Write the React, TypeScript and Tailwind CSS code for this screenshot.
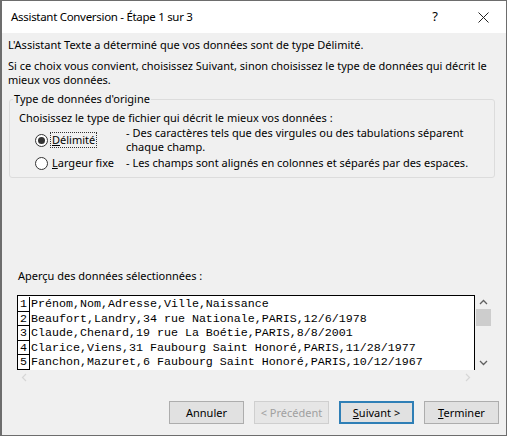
import React from "react"

const rows = [
  "Prénom,Nom,Adresse,Ville,Naissance",
  "Beaufort,Landry,34 rue Nationale,PARIS,12/6/1978",
  "Claude,Chenard,19 rue La Boétie,PARIS,8/8/2001",
  "Clarice,Viens,31 Faubourg Saint Honoré,PARIS,11/28/1977",
  "Fanchon,Mazuret,6 Faubourg Saint Honoré,PARIS,10/12/1967",
]

const mono = { fontFamily: '"Liberation Mono", monospace' }

function Radio({ checked }: { checked?: boolean }) {
  return (
    <span className="w-[13px] h-[13px] rounded-full border border-[#333] bg-white flex items-center justify-center shrink-0">
      {checked && <span className="w-[7px] h-[7px] rounded-full bg-[#333]" />}
    </span>
  )
}

function Btn({ children, disabled, primary }: { children: React.ReactNode; disabled?: boolean; primary?: boolean }) {
  return (
    <button
      className={
        "w-[75px] h-[23px] text-[11px] leading-none flex items-center justify-center " +
        (primary
          ? "border-2 border-[#2f7fb6] bg-[#e1e1e1] text-black"
          : disabled
          ? "border border-[#cfcfcf] bg-[#e6e6e6] text-[#a0a0a0]"
          : "border border-[#adadad] bg-[#e1e1e1] text-black")
      }
    >
      {children}
    </button>
  )
}

export default function App() {
  return (
    <div
      className="w-[507px] h-[436px] bg-[#f0f0f0] border border-[#6d6d6d] border-l-2 flex flex-col text-black"
      style={{ fontFamily: '"Noto Sans", "Open Sans", sans-serif' }}
    >
      <div className="h-[32px] bg-white flex items-center pl-[9px] shrink-0">
        <span className="text-[11.5px] tracking-[-0.3px] flex-1">Assistant Conversion - Étape 1 sur 3</span>
        <span className="text-[13px] w-[46px] text-center mr-[2px]">?</span>
        <span className="w-[46px] flex justify-center">
          <svg width="11" height="11" viewBox="0 0 11 11" fill="none" stroke="#222" strokeWidth="1">
            <path d="M0.5 0.5 L10.5 10.5 M10.5 0.5 L0.5 10.5" />
          </svg>
        </span>
      </div>

      <div className="flex flex-col px-[6px] pt-[4px] text-[11px] leading-[14px] flex-1">
        <p className="mt-[1px]">L'Assistant Texte a déterminé que vos données sont de type Délimité.</p>
        <p className="mt-[7px] whitespace-nowrap">
          Si ce choix vous convient, choisissez Suivant, sinon choisissez le type de données qui décrit le
          <br />
          mieux vos données.
        </p>

        <fieldset className="mt-[5px] mx-[1px] mr-[5px] border border-[#dcdcdc] rounded-[3px] pl-[9px] pr-2 pb-[7px]">
          <legend className="px-[1px] ml-[-6px]">Type de données d'origine</legend>
          <p className="mt-[5px]">Choisissez le type de fichier qui décrit le mieux vos données :</p>
          <div className="mt-[1px] grid grid-cols-[107px_1fr] items-center gap-y-[2px] leading-[14px]">
            <div className="flex items-center gap-[3px] pl-[16px]">
              <Radio checked />
              <span className="outline-1 outline-dotted outline-[#333] px-[1px]">
                <u>D</u>élimité
              </span>
            </div>
            <div>
              <div>- Des caractères tels que des virgules ou des tabulations séparent</div>
              <div>chaque champ.</div>
            </div>
            <div className="flex items-center gap-[4px] pl-[16px]">
              <Radio />
              <span>
                <u>L</u>argeur fixe
              </span>
            </div>
            <div>- Les champs sont alignés en colonnes et séparés par des espaces.</div>
          </div>
        </fieldset>

        <p className="mt-[91px] ml-[10px]">Aperçu des données sélectionnées :</p>

        <div className="mt-[12px] ml-[9px] flex">
          <div className="w-[458px] h-[75px] border border-black border-b-0 bg-white overflow-hidden pt-[1px]">
            {rows.concat([""]).map((r, i) => (
              <div key={i} className="flex h-[14.5px] items-center">
                <span className="w-[12px] h-full border-r border-b border-black text-center text-[11.67px] leading-[14px] shrink-0" style={mono}>
                  {r ? i + 1 : ""}
                </span>
                <span className="pl-[1px] text-[11.67px] whitespace-pre leading-[14px]" style={mono}>
                  {r}
                </span>
              </div>
            ))}
          </div>
          <div className="w-[17px] h-[75px] flex flex-col items-center">
            <svg width="9" height="6" viewBox="0 0 9 6" className="mt-[4px]" fill="none" stroke="#606060" strokeWidth="1.3">
              <path d="M1 5 L4.5 1.5 L8 5" />
            </svg>
            <div className="mt-[4px] w-[15px] h-[17px] bg-[#cdcdcd]" />
            <div className="flex-1" />
            <svg width="9" height="6" viewBox="0 0 9 6" className="mb-[4px]" fill="none" stroke="#606060" strokeWidth="1.3">
              <path d="M1 1 L4.5 4.5 L8 1" />
            </svg>
          </div>
        </div>
        <div className="ml-[9px] w-[458px] h-[14px] flex items-center justify-between px-[4px]">
          <svg width="6" height="9" viewBox="0 0 6 9" fill="none" stroke="#d6d6d6" strokeWidth="1.2">
            <path d="M5 1 L1.5 4.5 L5 8" />
          </svg>
          <svg width="6" height="9" viewBox="0 0 6 9" fill="none" stroke="#d6d6d6" strokeWidth="1.2">
            <path d="M1 1 L4.5 4.5 L1 8" />
          </svg>
        </div>

        <div className="mt-auto mb-[11px] flex justify-end gap-[10px] pr-[1px]">
          <Btn>Annuler</Btn>
          <Btn disabled>&lt; Précédent</Btn>
          <Btn primary>
            <span><u>S</u>uivant &gt;</span>
          </Btn>
          <Btn>
            <span><u>T</u>erminer</span>
          </Btn>
        </div>
      </div>
    </div>
  )
}
